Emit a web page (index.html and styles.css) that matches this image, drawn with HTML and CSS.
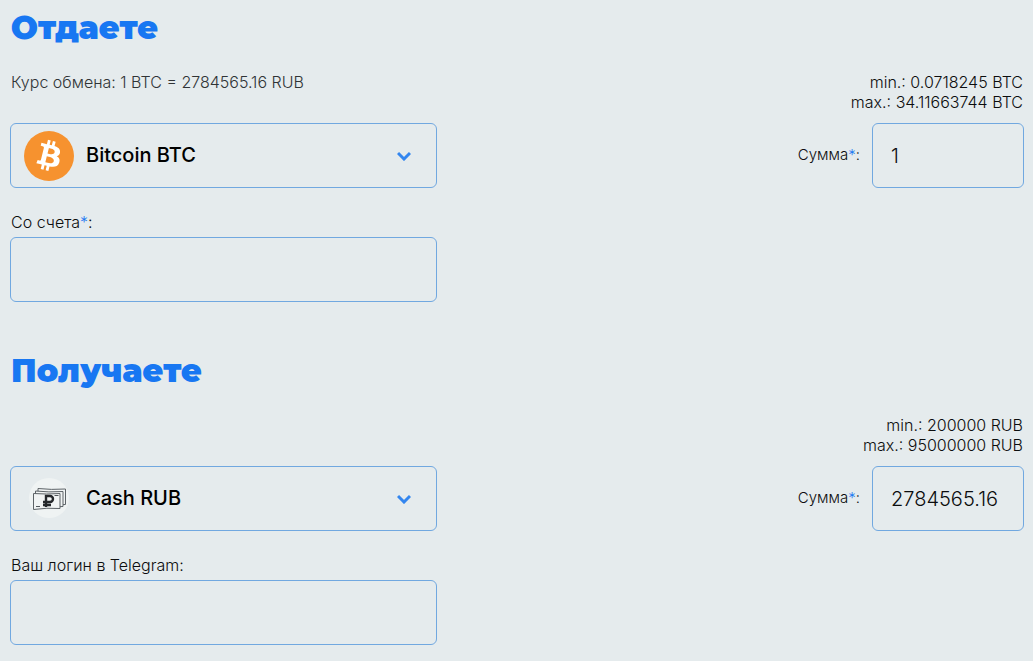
FILE: index.html
```html
<!DOCTYPE html>
<html lang="ru">
<head>
  <meta charset="UTF-8">
  <meta name="viewport" content="width=device-width, initial-scale=1.0">
  <title>Обмен Bitcoin BTC на Cash RUB</title>
  <link rel="stylesheet" href="styles.css">
</head>
<body>
  <form class="exchange">
    <section class="side">
      <h2>Отдаете</h2>
      <div class="info">
        <p class="rate">Курс обмена: 1 BTC = 2784565.16 RUB</p>
        <p class="limits">min.: 0.0718245 BTC<br>max.: 34.11663744 BTC</p>
      </div>
      <div class="row">
        <div class="currency">
          <svg class="currency-icon" viewBox="0 0 64 64" aria-hidden="true">
            <circle cx="32" cy="32" r="32" fill="#f6922f"/>
            <path fill="#fff" d="M46.1 27.4c.6-4.3-2.600-6.500-7-8.100l1.400-5.700-3.500-.9-1.400 5.600c-.9-.2-1.900-.4-2.800-.7l1.400-5.600-3.500-.9-1.400 5.700c-.8-.2-1.500-.3-2.200-.5l-4.800-1.200-.9 3.700s2.600.6 2.500.6c1.400.4 1.700 1.300 1.600 2l-1.600 6.500-2.300 9.100c-.2.4-.6 1.100-1.600.8 0 .1-2.500-.6-2.500-.6l-1.700 4 4.500 1.100c.8.2 1.700.4 2.500.6l-1.400 5.800 3.500.9 1.400-5.700c1 .3 1.900.5 2.800.7l-1.400 5.700 3.500.9 1.400-5.800c6 1.100 10.500.7 12.400-4.700 1.500-4.400-.1-6.900-3.200-8.500 2.300-.5 4-2 4.400-5.100zM38.100 38.700c-1.100 4.400-8.400 2-10.800 1.400l1.900-7.700c2.400.6 10 1.800 8.900 6.300zM39.200 27.300c-1 4-7.100 2-9.100 1.500l1.800-7c2 .5 8.400 1.400 7.300 5.500z"/>
          </svg>
          <select aria-label="Отдаваемая валюта">
            <option>Bitcoin BTC</option>
          </select>
          <svg class="chevron" viewBox="0 0 14 10" aria-hidden="true"><path d="M1 2l6 6 6-6"/></svg>
        </div>
        <div class="amount">
          <label for="sum-give">Сумма<span class="req">*</span>:</label>
          <input type="text" id="sum-give" value="1">
        </div>
      </div>
      <div class="field">
        <label for="account">Со счета<span class="req">*</span>:</label>
        <input type="text" id="account">
      </div>
    </section>

    <section class="side">
      <h2>Получаете</h2>
      <div class="info">
        <p class="limits">min.: 200000 RUB<br>max.: 95000000 RUB</p>
      </div>
      <div class="row">
        <div class="currency">
          <svg class="currency-icon" viewBox="0 0 50 50" aria-hidden="true">
            <circle cx="25" cy="24" r="20" fill="#eff3f3"/>
            <g fill="#f1f4f4" stroke="#5d6367" stroke-width="1">
              <path d="M14 14.500q13 1.500 27.500.5v15.500q-14 1-27.500 0z"/>
              <path d="M11.500 17q13 1.500 27.500 .5v15q-14 1-27.500 0z"/>
              <path d="M9.500 19.500q13 1 26.500 0v15q-13-1-26.500 1z"/>
            </g>
            <path d="M12 32.500h4M30.500 21.500h4" stroke="#53585c"/>
            <path d="M22 33V22h4a3 3 0 0 1 0 6h-7M19 31h8" fill="none" stroke="#25282b" stroke-width="2.400"/>
          </svg>
          <select aria-label="Получаемая валюта">
            <option>Cash RUB</option>
          </select>
          <svg class="chevron" viewBox="0 0 14 10" aria-hidden="true"><path d="M1 2l6 6 6-6"/></svg>
        </div>
        <div class="amount">
          <label for="sum-get">Сумма<span class="req">*</span>:</label>
          <input type="text" id="sum-get" value="2784565.16">
        </div>
      </div>
      <div class="field">
        <label for="telegram">Ваш логин в Telegram:</label>
        <input type="text" id="telegram">
      </div>
    </section>
  </form>
</body>
</html>
```
FILE: styles.css
```css
* {
  box-sizing: border-box;
}

body {
  margin: 0;
  background: #e5ebed;
  color: #0c0d0e;
  font-family: Inter, "Liberation Sans", sans-serif;
  font-size: 16px;
  font-weight: 300;
  line-height: 20px;
}

.exchange {
  padding: 8px 9px 0 10px;
}

.side {
  margin-bottom: 49px;
}

.side:last-child {
  margin-bottom: 16px;
}

h2 {
  margin: 0 0 24px;
  padding-left: 1px;
  color: #1877f2;
  font-family: Montserrat, Inter, sans-serif;
  font-size: 32px;
  font-weight: 900;
  line-height: 40px;
}

.info {
  display: flex;
  justify-content: space-between;
  margin-bottom: 11px;
  padding: 0 1px;
}

.info p {
  margin: 0;
}

.rate {
  color: #303436;
}

.info .limits {
  margin-left: auto;
  text-align: right;
}

.row {
  display: flex;
  justify-content: space-between;
  margin-bottom: 24px;
}

.currency {
  position: relative;
  width: 42.1%;
}

input,
select {
  display: block;
  width: 100%;
  height: 65px;
  border: 1px solid #71a8e0;
  border-radius: 6px;
  background: transparent;
  color: #0c0d0e;
  font-family: inherit;
  font-size: 20px;
  font-weight: 300;
  padding: 0 18px;
}

select {
  appearance: none;
  padding: 0 48px 2px 75px;
  color: #000;
  font-weight: 500;
  cursor: pointer;
}

.currency-icon {
  position: absolute;
  top: 8px;
  left: 14px;
  width: 50px;
  height: 50px;
  pointer-events: none;
}

.chevron {
  position: absolute;
  top: 28px;
  right: 26px;
  width: 14px;
  height: 10px;
  fill: none;
  stroke: #3386ef;
  stroke-width: 3;
  pointer-events: none;
}

.amount {
  display: flex;
  align-items: center;
  justify-content: flex-end;
  gap: 12px;
  width: 42.1%;
}

.amount label {
  padding-bottom: 2px;
  font-size: 15px;
}

.amount input {
  width: 152px;
}

.req {
  color: #1877f2;
}

.field {
  width: 42.1%;
}

.field label {
  display: block;
  margin-bottom: 5px;
  padding-left: 1px;
}
```
